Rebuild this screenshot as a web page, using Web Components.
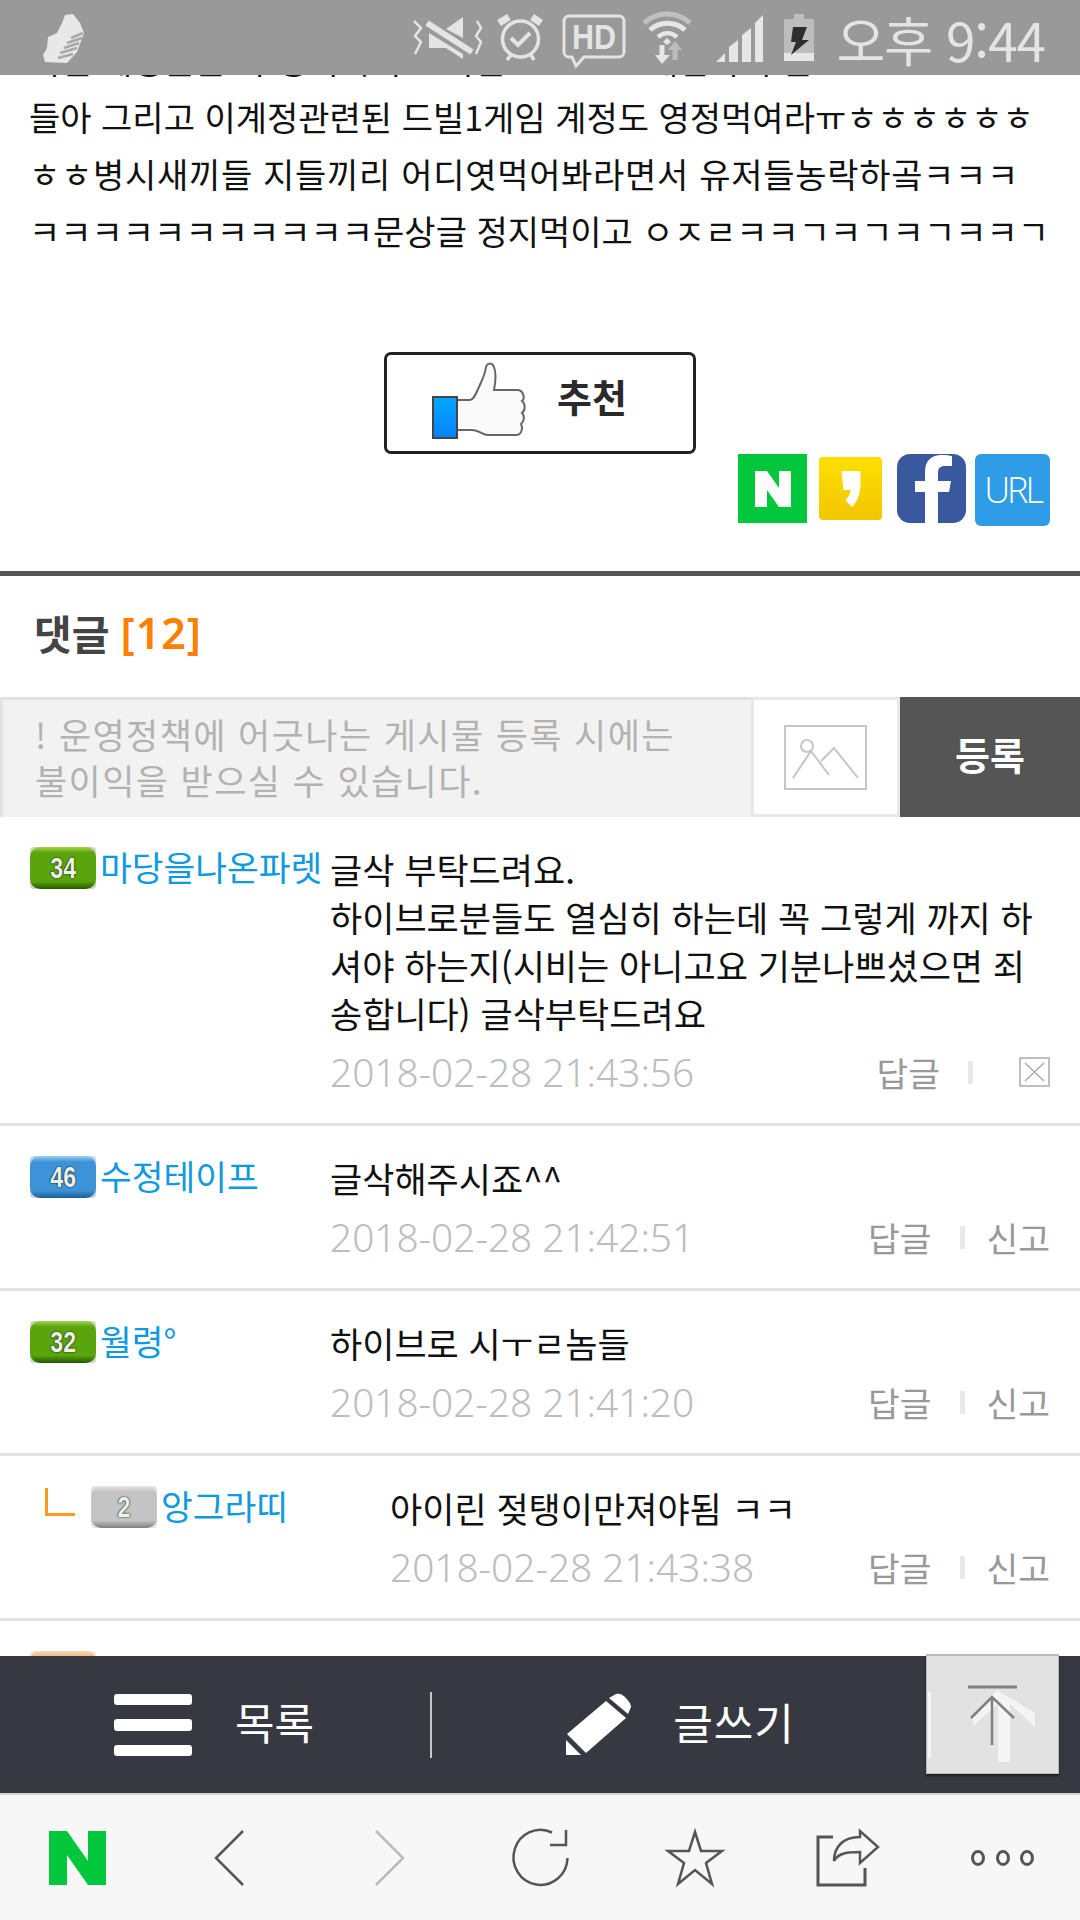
<!DOCTYPE html>
<html lang="ko">
<head>
<meta charset="utf-8">
<title>댓글</title>
<style>
	html, body { margin: 0; padding: 0; background: #fff; }
	body { font-family: "Noto Sans CJK KR", "Noto Sans", sans-serif; }
</style>
</head>
<body>
<app-page>
	<status-bar slot="status"></status-bar>

	<post-body>
		<span>이런 계정들은 다 정지시키고 이런</span><span style="margin-left:142px">게임하지 말고</span><br>
		들아 그리고 이계정관련된 드빌1게임 계정도 영정먹여라ㅠㅎㅎㅎㅎㅎㅎ<br>
		<span style="letter-spacing:.7px">ㅎㅎ병시새끼들 지들끼리 어디엿먹어봐라면서 유저들농락하곸ㅋㅋㅋ</span><br>
		ㅋㅋㅋㅋㅋㅋㅋㅋㅋㅋㅋ문상글 정지먹이고 ㅇㅈㄹㅋㅋㄱㅋㄱㅋㄱㅋㅋㄱ
	</post-body>
	<recommend-button>추천</recommend-button>
	<share-row></share-row>

	<comment-head count="12"></comment-head>
	<comment-form></comment-form>

	<comment-item level="34" tone="green" name="마당을나온파렛" date="2018-02-28 21:43:56" own>글삭 부탁드려요.<br>하이브로분들도 열심히 하는데 꼭 그렇게 까지 하<br>셔야 하는지(시비는 아니고요 기분나쁘셨으면 죄<br>송합니다) 글삭부탁드려요</comment-item>
	<comment-item level="46" tone="blue" name="수정테이프" date="2018-02-28 21:42:51">글삭해주시죠^^</comment-item>
	<comment-item level="32" tone="green" name="월령°" date="2018-02-28 21:41:20">하이브로 시ㅜㄹ놈들</comment-item>
	<comment-item level="2" tone="gray" name="앙그라띠" date="2018-02-28 21:43:38" reply>아이린 젖탱이만져야됨 ㅋㅋ</comment-item>
	<comment-item level="" tone="peach" name="" date=""></comment-item>

	<action-bar slot="bottom"></action-bar>
	<browser-bar slot="bottom"></browser-bar>
	<top-button slot="float"></top-button>
</app-page>

<script>
const kr = '"Noto Sans CJK KR", "Noto Sans", sans-serif';

class AppPage extends HTMLElement {
	constructor() {
		super();
		this.attachShadow({ mode: 'open' });
		this.shadowRoot.innerHTML = `
			<style>
				:host { display: flex; flex-direction: column; position: relative; width: 1080px; height: 1920px; overflow: hidden; background: #fff; }
				main { flex: 1; min-height: 0; overflow: hidden; }
				.fab { position: absolute; z-index: 3; left: 926px; top: 1654px; }
			</style>
			<slot name="status"></slot>
			<main><slot></slot></main>
			<slot name="bottom"></slot>
			<div class="fab"><slot name="float"></slot></div>
		`;
	}
}

class StatusBar extends HTMLElement {
	constructor() {
		super();
		this.attachShadow({ mode: 'open' });
		this.shadowRoot.innerHTML = `
			<style>
				:host { display: flex; align-items: center; position: relative; z-index: 2; height: 75px; flex: none; background: #999; color: #e4e4e4; padding: 0 35px 0 44px; box-sizing: border-box; }
				svg { display: block; flex: none; overflow: visible; }
				.shoe { margin-right: auto; margin-top: 1px; }
				.icons { display: flex; align-items: center; }
				time { font: 400 53px/71px ${kr}; white-space: nowrap; margin: 3px 0 0 23px; letter-spacing: -1px; }
			</style>
			<svg class="shoe" width="40" height="50" viewBox="0 0 40 50"><path d="M21 2L29 1 36 10 40 20 33 39 23 50 1 49-1 42 3 35 4 24 13 20 18 10z" fill="#e8e8e8"/><path d="M27 25l12-5M23 30l15-5M20 35l15-5M16 40l17-5M14 45l15-4" stroke="#a8a8a8" stroke-width="2.500" fill="none"/></svg>
			<div class="icons">
				<svg width="67" height="45" viewBox="0 0 67 45" style="margin-right:15px" fill="#e4e4e4"><path d="M0 6l7 7-6 8 6 6-6 12M63 6l4 7-5 8 5 6-5 12" fill="none" stroke="#e4e4e4" stroke-width="2.500"/><path d="M32 14L49 2v21zM15 18l34 21v5L32 33H15z"/><path d="M13 8l45 29" stroke="#e4e4e4" stroke-width="6" fill="none"/></svg>
				<svg width="48" height="47" viewBox="0 0 48 47" style="margin:2px 18px 0 0" fill="none" stroke="#e4e4e4"><circle cx="24.500" cy="24" r="18" stroke-width="3.500"/><path d="M15 23l7 7 12-12" stroke-width="4"/><path d="M3 8L13 2M36 2l9 6" stroke-width="7"/><path d="M11 45l4-5M38 45l-3-5" stroke-width="3.500"/></svg>
				<svg width="64" height="54" viewBox="0 0 64 54" style="margin:7px 16px 0 0" fill="none" stroke="#e4e4e4" stroke-width="3"><path d="M7 2h50a5 5 0 0 1 5 5v31a5 5 0 0 1-5 5H22l-8 9-4-9H7a5 5 0 0 1-5-5V7a5 5 0 0 1 5-5z"/><text x="32" y="35" text-anchor="middle" font-family="Liberation Sans, sans-serif" font-weight="700" font-size="35" fill="#e4e4e4" stroke="none" textLength="44" lengthAdjust="spacingAndGlyphs">HD</text></svg>
				<svg width="52" height="52" viewBox="0 0 52 52" style="margin:0 21px 0 0" fill="none"><path d="M2 11C15 -1 35 -1 48 11" stroke="#c0c0c0" stroke-width="5"/><path d="M8 18c10-9 25-9 35 0" stroke="#e6e6e6" stroke-width="5"/><path d="M16 25c6-5 13-5 19 0" stroke="#e6e6e6" stroke-width="4.500"/><path d="M21 30l4-4 4 4-4 3z" fill="#e6e6e6"/><path d="M13 43h15l-8 9z" fill="#e6e6e6"/><path d="M20 33v11" stroke="#e6e6e6" stroke-width="5"/><path d="M33 48V37" stroke="#bdbdbd" stroke-width="5"/><path d="M26 38l7-9 7 9z" fill="#bdbdbd"/></svg>
				<svg width="49" height="47" viewBox="0 0 49 47" style="margin:2px 20px 0 0" fill="#e6e6e6"><path d="M1 47l9-9v9zM14 47V32l9-7v22zM27 47V20l9-7v34zM40 47V8l8-8v47z"/></svg>
				<svg width="30" height="48" viewBox="0 0 30 48" style="margin-top:1px"><path d="M10 0h10v5h10v34H0V5h10z" fill="#bdbdbd"/><path d="M0 39h30v8H0z" fill="#e6e6e6"/><path d="M9 13h14l-5 13h7L7 41l5-13H7z" fill="#2e2e2e"/></svg>
				<time>오후 9:44</time>
			</div>
		`;
	}
}

class PostBody extends HTMLElement {
	constructor() {
		super();
		this.attachShadow({ mode: 'open' });
		this.shadowRoot.innerHTML = `
			<style>
				:host { display: block; margin-top: -44px; padding: 0 0 0 29px; font: 400 34px/57px ${kr}; color: #111; white-space: nowrap; }
			</style>
			<slot></slot>
		`;
	}
}

class RecommendButton extends HTMLElement {
	constructor() {
		super();
		this.attachShadow({ mode: 'open' });
		this.shadowRoot.innerHTML = `
			<style>
				:host { display: flex; align-items: center; width: 312px; height: 102px; box-sizing: border-box; margin: 93px 0 0 384px; border: 3px solid #222; border-radius: 7px; padding: 0 0 6px 45px; gap: 32px; background: #fff; }
				svg { display: block; flex: none; overflow: visible; }
				span { font: 700 38px/1 ${kr}; color: #2a2a2a; margin-bottom: 8px; }
			</style>
			<svg width="93" height="75" viewBox="0 0 93 75">
				<defs><linearGradient id="cuff" x1="0" y1="0" x2="0" y2="1"><stop offset="0" stop-color="#00a8ff"/><stop offset="1" stop-color="#0a80ff"/></linearGradient></defs>
				<path d="M25 37H38C42 37 44 30 47 24 50 17 53 12 54 4 55 0 60 -1 62 4 65 12 63 22 62 27H85C92 27 93 36 90 38 94 41 93 48 90 50 93 53 92 59 89 61 91 65 90 72 84 72H56C50 72 48 67 40 67H25Z" fill="#fafafa" stroke="#666" stroke-width="2"/>
				<rect x="1" y="34" width="24" height="41" fill="url(#cuff)" stroke="#444" stroke-width="2"/>
			</svg>
			<span><slot></slot></span>
		`;
	}
}

class ShareRow extends HTMLElement {
	constructor() {
		super();
		this.attachShadow({ mode: 'open' });
		this.shadowRoot.innerHTML = `
			<style>
				:host { display: flex; align-items: flex-start; justify-content: flex-end; height: 117px; padding-right: 30px; border-bottom: 5px solid #555; box-sizing: content-box; }
				.i { display: flex; align-items: center; justify-content: center; flex: none; box-sizing: border-box; overflow: hidden; }
				.n { width: 69px; height: 69px; background: #00c73c; margin-right: 12px; color: #fff; }
				.k { width: 63px; height: 63px; margin: 3px 15px 0 0; border-radius: 4px; background: linear-gradient(#ffdf00, #f2c500); }
				.f { width: 69px; height: 69px; margin-right: 9px; border-radius: 13px; background: #3a589e; }
				.u { width: 75px; height: 72px; border-radius: 6px; background: #2f9ce8; color: #fff; font: 300 36px/1 "Open Sans", sans-serif; letter-spacing: -3px; }
				svg { display: block; overflow: visible; }
			</style>
			<div class="i n"><svg width="36" height="36" viewBox="0 0 36 36"><path d="M0 0h12l12 17V0h12v36H24L12 19v17H0z" fill="#fcfcfc"/></svg></div>
			<div class="i k"><svg width="20" height="36" viewBox="0 0 20 38"><path d="M0 0h20v14c0 9-3 18-9 24L4 31c3-3 5-7 6-11H2z" fill="#fff"/></svg></div>
			<div class="i f"><svg width="69" height="69" viewBox="0 0 69 69"><path d="M28 69V38H18V27h10v-9C28 7 34 1 45 1c4 0 8 .5 10 1v10h-7c-5 0-7 2-7 7v8h13l-2 11H41v31z" fill="#fff"/></svg></div>
			<div class="i u">URL</div>
		`;
	}
}

class CommentHead extends HTMLElement {
	constructor() {
		super();
		this.attachShadow({ mode: 'open' });
		this.shadowRoot.innerHTML = `
			<style>
				:host { display: flex; align-items: center; height: 121px; padding: 0 0 8px 34px; font: 700 41px/1 ${kr}; color: #444; gap: 11px; box-sizing: border-box; }
				b { color: #ff8000; font: 600 43px/1 "Noto Sans", sans-serif; letter-spacing: 1px; }
			</style>
			<span>댓글</span><b>[${this.getAttribute('count')}]</b>
		`;
	}
}

class CommentForm extends HTMLElement {
	constructor() {
		super();
		this.attachShadow({ mode: 'open' });
		this.shadowRoot.innerHTML = `
			<style>
				:host { display: flex; height: 120px; }
				.text { box-sizing: border-box; width: 751px; background: #f2f2f2; border: solid #e2e2e2; border-width: 3px 0 0 3px; padding: 11px 0 0 32px; font: 400 35px/46px ${kr}; color: #b2b2b2; letter-spacing: 1.4px; white-space: nowrap; }
				.photo { box-sizing: border-box; width: 149px; display: flex; align-items: center; justify-content: center; background: #fff; border: 3px solid #e8e8e8; }
				.send { flex: 1; display: flex; align-items: center; justify-content: center; background: #555; color: #fff; font: 700 38px/1 ${kr}; padding-bottom: 6px; }
				svg { display: block; overflow: visible; }
			</style>
			<div class="text">! 운영정책에 어긋나는 게시물 등록 시에는<br>불이익을 받으실 수 있습니다.</div>
			<div class="photo"><svg width="83" height="65" viewBox="0 0 83 65" fill="none" stroke="#c6c6c6" stroke-width="2"><rect x="1" y="1" width="81" height="63"/><circle cx="23" cy="21" r="6"/><path d="M9 55L27 28l18 24M37 38l13-13 24 30" transform="translate(0,-2)"/></svg></div>
			<div class="send">등록</div>
		`;
	}
}

class LevelBadge extends HTMLElement {
	constructor() {
		super();
		this.attachShadow({ mode: 'open' });
		this.shadowRoot.innerHTML = `
			<style>
				:host { display: flex; align-items: center; justify-content: center; flex: none; width: 66px; height: 42px; box-sizing: border-box; border-radius: 4px; font: 700 29px/1 "Liberation Sans", sans-serif; color: #eef2e8; position: relative; overflow: hidden; }
				:host([tone=green]) { --c1: #a6d24e; --c2: #5aa40c; --c3: #235800; --k: #c9d6bb; }
				:host([tone=blue]) { --c1: #9ad0f4; --c2: #3d93d8; --c3: #1c5f94; --k: #c3d3df; }
				:host([tone=gray]) { --c1: #e4e4e4; --c2: #c4c4c4; --c3: #808080; --k: #e2e2e2; }
				:host([tone=peach]) { --c1: #f6d9b8; --c2: #eeb77c; --c3: #c98a4a; --k: #f4e6d6; }
				:host { background: var(--k); }
				i { position: absolute; inset: 0; border-radius: 10px; background: linear-gradient(var(--c1) 0, var(--c2) 14%, var(--c2) 82%, var(--c3) 100%); }
				span { position: relative; transform: scaleX(.8); text-shadow: 0 0 2px rgba(0,0,0,.85), 0 0 1px rgba(0,0,0,.85); }
			</style>
			<i></i><span>${this.getAttribute('level') || ''}</span>
		`;
	}
}

class CommentItem extends HTMLElement {
	constructor() {
		super();
		const reply = this.hasAttribute('reply');
		const own = this.hasAttribute('own');
		const tail = own
			? `<svg width="31" height="30" viewBox="0 0 31 30" fill="none" stroke="#aaa" stroke-width="1.5" style="margin-left:46px"><rect x="1" y="1" width="29" height="28"/><path d="M6 6l19 18M25 6L6 24"/></svg>`
			: `<span style="margin-left:22px;">신고</span>`;
		this.attachShadow({ mode: 'open' });
		this.shadowRoot.innerHTML = `
			<style>
				:host { display: grid; grid-template-columns: 300px 1fr; padding: 28px 30px 27px 30px; border-bottom: 3px solid #e3e3e3; min-height: 107px; }
				:host([reply]) { grid-template-columns: 360px 1fr; }
				.who { display: flex; align-items: flex-start; }
				.elbow { box-sizing: border-box; width: 30px; height: 28px; margin: 4px 16px 0 15px; border: solid #ff9a1e; border-width: 0 0 3px 3px; flex: none; }
				level-badge { margin-top: 2px; }
				.name { margin-left: 4px; font: 400 34.5px/42px ${kr}; color: #0d9ae0; white-space: nowrap; }
				.text { font: 400 35px/48px ${kr}; color: #111; white-space: nowrap; }
				.meta { display: flex; align-items: center; margin-top: 11px; height: 48px; }
				time { font: 300 38.8px/48px "Noto Sans", sans-serif; color: #bdbdbd; white-space: nowrap; }
				.acts { margin-left: auto; display: flex; align-items: center; font: 400 34.5px/48px ${kr}; color: #999; }
				.sep { width: 5px; height: 23px; background: #e8e8e8; margin-left: 28px; flex: none; }
				svg { display: block; flex: none; }
			</style>
			<div class="who">
				${reply ? '<div class="elbow"></div>' : ''}
				<level-badge level="${this.getAttribute('level')}" tone="${this.getAttribute('tone')}"></level-badge>
				<span class="name">${this.getAttribute('name')}</span>
			</div>
			<div>
				<div class="text"><slot></slot></div>
				<div class="meta">
					<time>${this.getAttribute('date')}</time>
					<div class="acts"><span>답글</span><div class="sep"></div>${tail}</div>
				</div>
			</div>
		`;
	}
}

class ActionBar extends HTMLElement {
	constructor() {
		super();
		this.attachShadow({ mode: 'open' });
		this.shadowRoot.innerHTML = `
			<style>
				:host { display: flex; align-items: center; position: relative; z-index: 1; flex: none; height: 139px; box-sizing: border-box; background: #373942; border-bottom: 2px solid #d4d4d4; color: #fff; padding-left: 114px; font: 400 43px/1 ${kr}; }
				svg { display: block; flex: none; overflow: visible; }
				.lbl { margin-left: 43px; padding-bottom: 6px; white-space: nowrap; }
				.div { width: 2px; height: 66px; background: #c8c8c8; margin: 0 134px 0 116px; flex: none; }
			</style>
			<svg width="78" height="62" viewBox="0 0 78 62" fill="#fff"><rect width="78" height="11" rx="3"/><rect y="25" width="78" height="12" rx="3"/><rect y="51" width="78" height="11" rx="3"/></svg>
			<span class="lbl">목록</span>
			<div class="div"></div>
			<svg width="66" height="62" viewBox="0 0 66 62" fill="#fff"><path d="M43 4l7-4c3-1 6 0 9 3s6 7 6 10l-3 7z"/><path d="M1 40L40 7l20 17-40 35z"/><path d="M0 46l15 15H0z"/></svg>
			<span class="lbl" style="margin-left:41px;letter-spacing:1px">글쓰기</span>
		`;
	}
}

class BrowserBar extends HTMLElement {
	constructor() {
		super();
		this.attachShadow({ mode: 'open' });
		this.shadowRoot.innerHTML = `
			<style>
				:host { display: flex; align-items: center; flex: none; height: 125px; background: #f7f7f7; padding: 0 0 0 49px; box-sizing: border-box; }
				svg { display: block; flex: none; overflow: visible; }
			</style>
			<svg width="57" height="54" viewBox="0 0 57 54"><path d="M0 0h18l21 30V0h18v54H39L18 24v30H0z" fill="#00c73c"/></svg>
			<svg style="margin-left:108px" width="30" height="56" viewBox="0 0 30 56" fill="none" stroke="#555" stroke-width="2.5"><path d="M29 1L2 28l27 27"/></svg>
			<svg style="margin-left:131px" width="30" height="56" viewBox="0 0 30 56" fill="none" stroke="#bbb" stroke-width="2.5"><path d="M1 1l27 27L1 55"/></svg>
			<svg style="margin-left:107px" width="57" height="58" viewBox="0 0 57 58" fill="none" stroke="#555" stroke-width="2.5"><path d="M55.5 29A27 27.5 0 1 1 40 3.500"/><path d="M54 1v15H38"/></svg>
			<svg style="margin-left:96px" width="60" height="58" viewBox="0 0 60 58" fill="none" stroke="#555" stroke-width="2.5"><path d="M30 3l6 19h21L41 34l6 21-17-14-17 14 6-21L3 22h21z"/></svg>
			<svg style="margin-left:92px" width="63" height="58" viewBox="0 0 63 58" fill="none" stroke="#555" stroke-width="3"><path d="M16 8H1v48h47V39"/><path d="M17 32c0-14 9-24 26-24V2l18 16-18 16V23c-12 0-22 1-26 9z" stroke-width="2.5"/></svg>
			<svg style="margin-left:91px" width="63" height="16" viewBox="0 0 63 16" fill="none" stroke="#555" stroke-width="3"><ellipse cx="7" cy="8" rx="5.500" ry="6.500"/><ellipse cx="32" cy="8" rx="5.500" ry="6.500"/><ellipse cx="56" cy="8" rx="5.500" ry="6.500"/></svg>
		`;
	}
}

class TopButton extends HTMLElement {
	constructor() {
		super();
		this.attachShadow({ mode: 'open' });
		this.shadowRoot.innerHTML = `
			<style>
				:host { display: block; width: 133px; height: 120px; box-sizing: border-box; background: #e2e2e2; border: 1px solid #bbb; border-top-width: 2px; box-shadow: 0 2px 2px rgba(0,0,0,.5); }
				svg { display: block; overflow: visible; margin: -2px -1px; }
			</style>
			<svg width="133" height="120" viewBox="0 0 133 120">
				<path d="M2 38h3v66H2z" fill="#f6f6f6"/>
				<path d="M71 36L109 59V73L84 50V108H72V50L47 72V62z" fill="#f4f4f4"/>
				<path d="M42 33h49" stroke="#808080" stroke-width="3" fill="none"/>
				<path d="M66 43v48M45 64l21-21 22 21" stroke="#808080" stroke-width="2.500" fill="none"/>
			</svg>
		`;
	}
}

// children first so the nested badge is ready when comment-item renders it
customElements.define('level-badge', LevelBadge);
customElements.define('status-bar', StatusBar);
customElements.define('post-body', PostBody);
customElements.define('recommend-button', RecommendButton);
customElements.define('share-row', ShareRow);
customElements.define('comment-head', CommentHead);
customElements.define('comment-form', CommentForm);
customElements.define('comment-item', CommentItem);
customElements.define('action-bar', ActionBar);
customElements.define('browser-bar', BrowserBar);
customElements.define('top-button', TopButton);
customElements.define('app-page', AppPage);
</script>
</body>
</html>
